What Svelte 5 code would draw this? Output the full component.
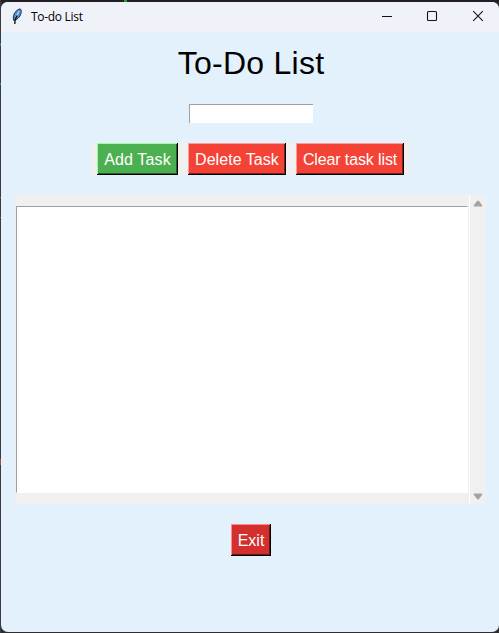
<script>
  let task = $state('');
  const actions = [
    { label: 'Add Task', kind: 'add', width: 81, tracking: 0.15 },
    { label: 'Delete Task', kind: 'remove', width: 98, tracking: 0.05 },
    { label: 'Clear task list', kind: 'remove', width: 108, tracking: -0.12 }
  ];
</script>

<div class="desktop">
  <i class="speck top"></i>
  <div class="window">
    <header>
      <svg class="feather" width="10" height="17" viewBox="0 0 10 17">
        <path d="M1.6 12.2C0.4 8 2.8 3 7 1.2 9.4 .4 9.6 3 9 5.3 8.2 8.9 5 12.2 1.6 12.2Z" fill="#4f8fd8" stroke="#20262f" stroke-width="1" />
        <path d="M4 9 7.2 3" stroke="#a9d4ff" stroke-width="1.3" />
        <path d="M2.8 16C2.6 12.5 3.5 10 5 7.5" fill="none" stroke="#05080c" stroke-width="1.3" />
      </svg>
      <span class="caption">To-do List</span>
      <div class="controls">
        <svg width="12" height="12" viewBox="0 0 12 12"><path d="M1 6.5H11" /></svg>
        <svg width="12" height="12" viewBox="0 0 12 12"><rect x="1.5" y="1.5" width="9" height="9" rx="1" /></svg>
        <svg width="12" height="12" viewBox="0 0 12 12"><path d="M1.2 1.2 10.8 10.8M10.8 1.2 1.2 10.8" /></svg>
      </div>
    </header>
    <main>
      <h1>To-Do List</h1>
      <input bind:value={task} aria-label="Task" />
      <div class="actions">
        {#each actions as action}
          <button class={action.kind} style="width: {action.width}px; letter-spacing: {action.tracking}px">{action.label}</button>
        {/each}
      </div>
      <div class="list">
        <div class="box"></div>
        <div class="scroll">
          <svg width="10" height="7" viewBox="0 0 10 7"><path d="M1 6.5Q.3 6.3 1 5L4 1Q5 0 6 1L9 5Q9.7 6.3 9 6.5Z" /></svg>
          <svg width="10" height="7" viewBox="0 0 10 7"><path d="M1 .5Q.3 .7 1 2L4 6Q5 7 6 6L9 2Q9.7 .7 9 .5Z" /></svg>
        </div>
      </div>
      <button class="exit">Exit</button>
    </main>
  </div>
</div>

<style>
  * { box-sizing: border-box; }
  .desktop {
    position: relative;
    width: 499px;
    height: 633px;
    padding: 2px 0 1px 1px;
    overflow: hidden;
    background:
      linear-gradient(#2c8a72, #2c8a72) 0 43px / 1px 3px no-repeat,
      linear-gradient(#2c8a72, #2c8a72) 0 83px / 1px 2px no-repeat,
      linear-gradient(#2c8a72, #2c8a72) 0 197px / 1px 1px no-repeat,
      linear-gradient(#2c8a72, #2c8a72) 0 217px / 1px 1px no-repeat,
      linear-gradient(#a84c34, #a84c34) 0 459px / 1px 6px no-repeat,
      linear-gradient(90deg, #3a3a3f 1px, transparent 1px),
      linear-gradient(#241f22 2px, #2c2e31 2px);
  }
  .speck { position: absolute; left: 124px; top: 0; width: 3px; height: 2px; background: #259b3d; }
  .window {
    height: 630px;
    border-radius: 7px;
    overflow: hidden;
    background: #e3f1fc;
    font-family: "Liberation Sans", Arial, sans-serif;
  }
  header {
    display: flex;
    align-items: center;
    height: 30px;
    padding-left: 11px;
    background: #eff3f9;
    color: #000;
  }
  .feather { margin-top: -2px; }
  .caption {
    margin: 0 0 0 9px;
    font: 12px/16px "Open Sans", "Noto Sans", sans-serif;
    letter-spacing: -0.3px;
    white-space: nowrap;
  }
  .controls { display: flex; gap: 33px; margin: -2px 16px 0 auto; }
  .controls svg { fill: none; stroke: #111; stroke-width: 1.1; }
  .controls svg:last-child { margin-right: -1px; margin-left: 1px; }
  main { display: flex; flex-direction: column; align-items: center; }
  h1 {
    margin: 12px 0 0 2px;
    font-size: 32px;
    line-height: 38px;
    font-weight: 400;
    letter-spacing: 0.25px;
    color: #000;
    white-space: nowrap;
  }
  input {
    width: 124px;
    height: 19px;
    margin: 22px 0 0 2px;
    padding: 0 2px;
    border: 0 solid #a0a0a0;
    border-width: 1px 0 0 1px;
    border-radius: 0;
    background: #fff;
    outline: none;
  }
  .actions {
    display: flex;
    gap: 10px;
    width: 317px;
    height: 32px;
    margin: 20px 0 0 1px;
    padding: 0 5px;
    background: #f0f0f0;
  }
  button {
    height: 32px;
    padding: 1px 0 0;
    border: 0;
    border-radius: 0;
    color: #fff;
    font: 16px/18px "Liberation Sans", Arial, sans-serif;
    white-space: nowrap;
  }
  .add {
    background: #4caf50;
    box-shadow: inset -1px -1px #000, inset 1px 1px #9dff9f, inset -2px -2px #266028;
  }
  .remove {
    background: #f44336;
    box-shadow: inset -1px -1px #000, inset 1px 1px #ff9e96, inset -2px -2px #7a211b;
  }
  .exit {
    width: 40px;
    margin: 20px 0 0 2px;
    background: #d32f2f;
    box-shadow: inset -1px -1px #000, inset 1px 1px #ff8c8c, inset -2px -2px #691717;
  }
  .list {
    display: flex;
    width: 471px;
    height: 309px;
    margin: 20px 0 0 1px;
    background: #f0f0f0;
    padding-left: 1px;
  }
  .box {
    width: 452px;
    height: 287px;
    margin-top: 11px;
    border: 1px solid #a0a0a0;
    border-right-color: #fff;
    border-bottom-color: #fff;
    background: #fff;
  }
  .scroll {
    display: flex;
    flex-direction: column;
    justify-content: space-between;
    align-items: center;
    width: 17px;
    margin-left: 1px;
    padding: 5px 0 4px;
    border-left: 1px solid #fff;
  }
  .scroll svg { fill: #a3a3a3; }
</style>
